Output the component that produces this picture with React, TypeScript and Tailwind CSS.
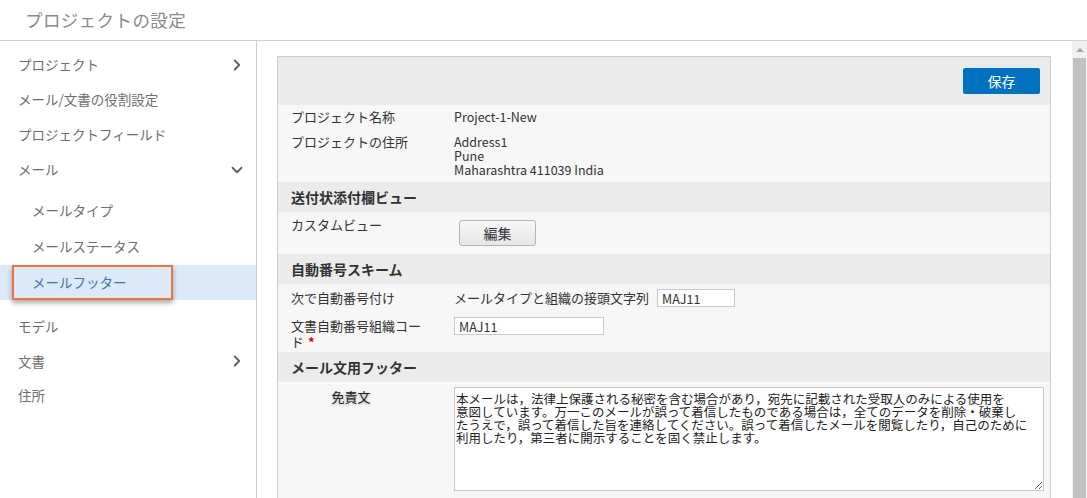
import { ChevronRight, ChevronDown } from "lucide-react";

const jp = { fontFamily: '"Noto Sans CJK JP", "Noto Sans", sans-serif' };

const footerText =
  "本メールは，法律上保護される秘密を含む場合があり，宛先に記載された受取人のみによる使用を\n" +
  "意図しています。万一このメールが誤って着信したものである場合は，全てのデータを削除・破棄し\n" +
  "たうえで，誤って着信した旨を連絡してください。誤って着信したメールを閲覧したり，自己のために\n" +
  "利用したり，第三者に開示することを固く禁止します。";

function NavItem({ label, h, icon }: any) {
  return (
    <div className={`flex items-center justify-between pl-[18px] pr-[10px] ${h}`}>
      <span>{label}</span>
      {icon === "right" && <ChevronRight size={18} strokeWidth={2.4} className="text-[#5e5e5e]" />}
      {icon === "down" && <ChevronDown size={18} strokeWidth={2.4} className="text-[#5e5e5e]" />}
    </div>
  );
}

function Section({ title }: any) {
  return (
    <div className="h-[30px] flex items-center pl-[13px] bg-[#ebebeb] text-[14px] font-bold text-[#333]">
      {title}
    </div>
  );
}

export default function App() {
  return (
    <div className="w-[1087px] h-[498px] overflow-hidden bg-white flex flex-col" style={jp}>
      <div className="h-[41px] shrink-0 border-b border-[#cfcfcf] flex items-center pl-[25px] text-[17.5px] text-[#8a8a8a] tracking-[0.4px]">
        プロジェクトの設定
      </div>

      <div className="flex flex-1 min-h-0">
        {/* sidebar */}
        <div className="w-[257px] shrink-0 border-r border-[#cfcfcf] text-[13.5px] text-[#6e6e6e] pt-[6px]">
          <NavItem label="プロジェクト" h="h-[35px]" icon="right" />
          <NavItem label="メール/文書の役割設定" h="h-[35px]" />
          <NavItem label="プロジェクトフィールド" h="h-[35px]" />
          <NavItem label="メール" h="h-[35px]" icon="down" />
          <div className="pt-[5px]">
            <div className="h-[36px] flex items-center pl-[32px]">メールタイプ</div>
            <div className="h-[37px] flex items-center pl-[32px]">メールステータス</div>
            <div className="h-[35px] bg-[#dceaf7]">
              <div className="ml-[12px] w-[161px] h-full border-2 border-[#f0733f] shadow-[0_3px_5px_rgba(0,0,0,0.35)] flex items-center pl-[18px] text-[#3f74b5]">
                メールフッター
              </div>
            </div>
          </div>
          <div className="mt-[9px]">
            <NavItem label="モデル" h="h-[35px]" />
            <NavItem label="文書" h="h-[34px]" icon="right" />
            <NavItem label="住所" h="h-[34px]" />
          </div>
        </div>

        {/* main */}
        <div className="flex-1 min-w-0 pl-[20px] pr-[21px] pt-[15px]">
          <div className="border-l border-t border-r border-[#cccccc] text-[13px] text-[#333] leading-[14px]">
            <div className="h-[48px] bg-[#ebebeb] flex justify-end pt-[11px] pr-[10px]">
              <button className="w-[77px] h-[26px] rounded-[2px] bg-[#0071bf] text-white text-[14px]">保存</button>
            </div>

            <div className="bg-[#f7f7f7] pt-[5px] pb-[5px] pl-[13px]">
              <div className="flex">
                <div className="w-[163px]">プロジェクト名称</div>
                <div className="text-[12.5px]">Project-1-New</div>
              </div>
              <div className="flex mt-[11px]">
                <div className="w-[163px]">プロジェクトの住所</div>
                <div className="text-[12.5px] leading-[14px]">
                  <div>Address1</div>
                  <div>Pune</div>
                  <div>Maharashtra 411039 India</div>
                </div>
              </div>
            </div>

            <Section title="送付状添付欄ビュー" />
            <div className="bg-[#f7f7f7] h-[42px] flex pl-[13px] pt-[6px]">
              <div className="w-[168px]">カスタムビュー</div>
              <button className="w-[77px] h-[26px] mt-[2px] border border-[#b5b5b5] rounded-[3px] bg-gradient-to-b from-[#f7f7f7] to-[#e6e6e6] text-[14px] text-[#333]">
                編集
              </button>
            </div>

            <Section title="自動番号スキーム" />
            <div className="bg-[#f7f7f7] pl-[13px] pt-[5px]">
              <div className="flex items-center h-[18px]">
                <div className="w-[163px]">次で自動番号付け</div>
                <div>メールタイプと組織の接頭文字列</div>
                <input
                  readOnly
                  value="MAJ11"
                  className="ml-[8px] w-[78px] h-[18px] border border-[#c8c8c8] bg-white px-[4px] text-[12.5px] text-[#333] outline-none"
                />
              </div>
              <div className="flex mt-[10px] pb-[2px]">
                <div className="w-[163px] leading-[16px] pt-[1px]">
                  文書自動番号組織コー
                  <br />
                  ド<span className="text-[#dd0000] ml-[4px] font-bold">*</span>
                </div>
                <input
                  readOnly
                  value="MAJ11"
                  className="w-[150px] h-[18px] border border-[#c8c8c8] bg-white px-[4px] text-[12.5px] text-[#333] outline-none"
                />
              </div>
            </div>

            <Section title="メール文用フッター" />
            <div className="bg-[#f7f7f7] flex pl-[13px] pt-[5px] h-[200px]">
              <div className="w-[120px] text-center pt-[3px] text-[#222] [text-shadow:0_1px_3px_rgba(0,0,0,0.35)]">
                免責文
              </div>
              <textarea
                readOnly
                wrap="off"
                defaultValue={footerText}
                className="ml-[43px] w-[590px] h-[104px] border border-[#c8c8c8] bg-white px-[1px] py-[4px] text-[12.5px] leading-[13px] text-[#222] overflow-hidden outline-none"
                style={jp}
              />
            </div>
          </div>
        </div>

        {/* scrollbar */}
        <div className="w-[15px] shrink-0 bg-[#f0f0f0] flex flex-col">
          <div className="h-[17px] flex items-center justify-center">
            <div className="w-0 h-0 border-l-[4px] border-r-[4px] border-b-[4px] border-l-transparent border-r-transparent border-b-[#a3a3a3]" />
          </div>
          <div className="flex-1 ml-[1px] mr-[1px] bg-[#c1c1c1]" />
        </div>
      </div>
    </div>
  );
}
